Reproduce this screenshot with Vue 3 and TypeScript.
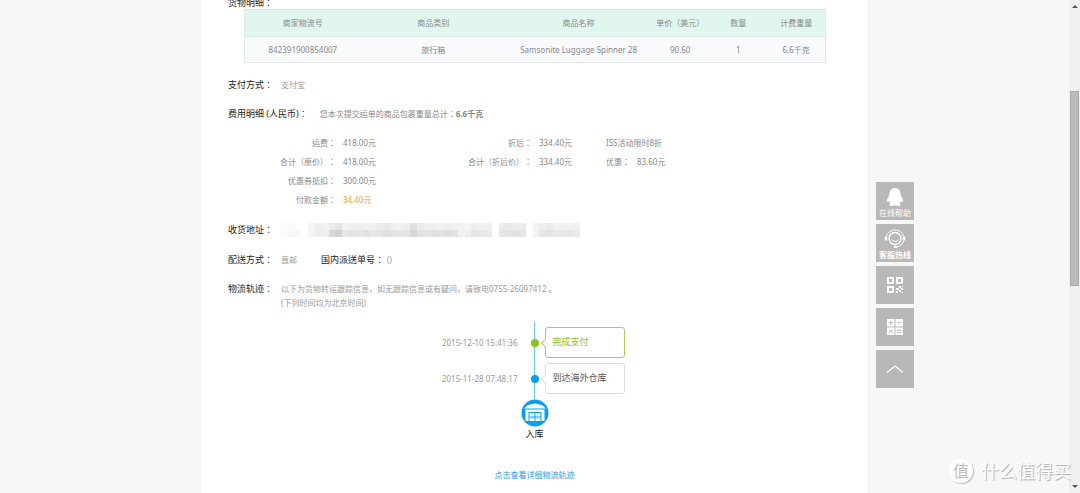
<script setup lang="ts">
interface Fee { label: string; value: string; accent?: boolean }

const columns: string[] = ['商家物流号', '商品类别', '商品名称', '单价（美元）', '数量', '计费重量']
const goods: string[][] = [
  ['842391900854007', '旅行箱', 'Samsonite Luggage Spinner 28', '90.60', '1', '6.6千克'],
]
const original: Fee[] = [
  { label: '运费：', value: '418.00元' },
  { label: '合计（原价）：', value: '418.00元' },
  { label: '优惠券抵扣：', value: '300.00元' },
  { label: '付款金额：', value: '34.40元', accent: true },
]
const discounted: Fee[] = [
  { label: '折后：', value: '334.40元' },
  { label: '合计（折后价）：', value: '334.40元' },
]
const events = [
  { time: '2015-12-10 15:41:36', text: '完成支付', state: 'done' },
  { time: '2015-11-28 07:48:17', text: '到达海外仓库', state: 'past' },
]
/* Grey levels of the tiles that hide the address, one list per row */
const mask: number[][] = [
  [
    250, 248, 255, 255, 245, 239, 243, 236, 229, 242, 240, 238, 242, 240, 236, 234, 240, 242, 238, 224, 236, 240,
    239, 241, 238, 240, 242, 244, 238, 242, 240, 255, 236, 234, 237, 236, 255, 243, 238, 235, 241, 239, 242, 240,
  ],
  [
    250, 247, 247, 255, 243, 238, 240, 214, 208, 230, 226, 229, 225, 231, 229, 223, 227, 230, 228, 214, 226, 228,
    224, 226, 222, 225, 240, 238, 229, 232, 235, 255, 230, 227, 225, 228, 255, 242, 230, 227, 234, 231, 229, 233,
  ],
]
</script>

<template>
  <div class="page">
    <div class="view">
      <main class="panel">
        <section class="goods">
          <h2>货物明细：</h2>
          <table>
            <colgroup>
              <col class="wide" /><col class="wider" /><col class="wider" /><col /><col /><col />
            </colgroup>
            <thead>
              <tr><th v-for="c in columns" :key="c" scope="col">{{ c }}</th></tr>
            </thead>
            <tbody>
              <tr v-for="row in goods" :key="row[0]"><td v-for="cell in row" :key="cell">{{ cell }}</td></tr>
            </tbody>
          </table>
        </section>

        <section class="line pay"><h2>支付方式：</h2><p>支付宝</p></section>
        <section class="line cost">
          <h2>费用明细 (人民币)：</h2>
          <p>您本次提交运单的商品包裹重量总计：<b>6.6千克</b></p>
        </section>

        <section class="fees">
          <dl class="first">
            <template v-for="f in original" :key="f.label">
              <dt>{{ f.label }}</dt><dd :class="{ accent: f.accent }">{{ f.value }}</dd>
            </template>
          </dl>
          <dl class="second">
            <template v-for="f in discounted" :key="f.label">
              <dt>{{ f.label }}</dt><dd>{{ f.value }}</dd>
            </template>
          </dl>
          <div class="third">
            <p>ISS活动限时8折</p>
            <p class="saving"><span>优惠：</span><span>83.60元</span></p>
          </div>
        </section>

        <section class="line address">
          <h2>收货地址：</h2>
          <div class="mask">
            <div v-for="(row, r) in mask" :key="r" class="tiles">
              <i v-for="(g, i) in row" :key="i" :style="{ backgroundColor: `rgb(${g}, ${g}, ${g})` }"></i>
            </div>
          </div>
        </section>
        <section class="line delivery">
          <h2>配送方式：</h2><p>直邮</p>
          <h2 class="number">国内派送单号：</h2><p>()</p>
        </section>
        <section class="line track">
          <h2>物流轨迹：</h2>
          <p>以下为货物转运跟踪信息，如无跟踪信息或有疑问，请致电0755-26097412 。<br />(下列时间均为北京时间)</p>
        </section>

        <section class="timeline">
          <ol>
            <li v-for="e in events" :key="e.time" :class="e.state">
              <time>{{ e.time }}</time><span class="dot"></span><p class="bubble">{{ e.text }}</p>
            </li>
          </ol>
          <div class="depot">
            <svg viewBox="0 0 28 28" width="28" height="28" aria-hidden="true">
              <circle cx="14" cy="14" r="13.5" fill="#0a9fe8" />
              <path d="M3 9.500 7 6 14 4.500l7 1.500 4 3.500z" fill="#fff" />
              <path d="M4.500 10.500h19V22h-3v-9h-13v9h-3z" fill="#fff" />
              <path d="M8.500 14h5v3.500h-5zM14.500 14h5v3.500h-5zM8.500 18.500h5V22h-5zM14.500 18.500h5V22h-5z" fill="#fff" />
              <path d="M10 15h2M16 15h2M10 19.500h2M16 19.500h2" stroke="#7cc9f2" stroke-width=".8" />
            </svg>
            <span>入库</span>
          </div>
        </section>
        <a class="more" href="#">点击查看详细物流轨迹</a>
      </main>

      <aside class="tools">
        <button type="button" class="labelled">
          <svg viewBox="0 0 22 20" width="22" height="20" aria-hidden="true">
            <path d="M11 1C7.500 1 5.500 3.600 5.500 7c0 1-.3 1.600-.8 2.400C3.400 11.300 2.600 13 3 14.700c.3.800 1.100.200 1.800-.6.300 1.200.9 2 1.700 2.700-.8.300-1.200.8-1 1.400.4 1 4.500.9 5.500.1 1 .8 5.100.9 5.500-.1.200-.6-.2-1.100-1-1.400.8-.7 1.400-1.500 1.700-2.700.7.800 1.500 1.400 1.800.6.400-1.700-.4-3.400-1.700-5.300-.5-.8-.8-1.400-.8-2.400 0-3.400-2-6-5.500-6z" fill="#fff" />
          </svg>
          <span>在线帮助</span>
        </button>
        <button type="button" class="labelled strong">
          <svg viewBox="0 0 22 20" width="22" height="20" fill="none" stroke="#fff" aria-hidden="true">
            <circle cx="11" cy="9.500" r="6" stroke-width="1.300" />
            <path d="M2.500 7C4 3 7 1 11 1s7 2 8.500 6M19.500 12c-1 3.500-3.500 5.500-7 6" />
            <path d="M2 7.500v4M20 7.500v4" stroke-width="2.500" />
            <path d="M7.500 10.500c1.500 2.500 5.500 2.500 7 0" />
            <path d="M10 18h3.500" stroke-width="2" />
          </svg>
          <span>客服热线</span>
        </button>
        <button type="button" aria-label="二维码">
          <svg viewBox="0 0 16 16" width="16" height="16" aria-hidden="true">
            <path d="M1 1h5v5H1zM10 1h5v5h-5zM1 10h5v5H1z" fill="none" stroke="#fff" stroke-width="2" />
            <path d="M9 11h3v2H9zM12 9h2v2h-2zM14 11h2v2h-2zM9 14h2v2H9zM12 13h2v2h-2zM14 15h2v1h-2zM15 9h1v1h-1z" fill="#fff" />
          </svg>
        </button>
        <button type="button" aria-label="计算器">
          <svg viewBox="0 0 16 16" width="16" height="16" aria-hidden="true">
            <path d="M0 0h7.500v7.500H0zM8.500 0H16v7.500H8.500zM0 8.500h7.500V16H0zM8.500 8.500H16V16H8.500z" fill="#fff" />
            <path d="M1.500 3.700h4.500M3.700 1.500v4.500M10 3.700h4.500M2 10.500l3.500 3.500M5.500 10.500 2 14M10 11.300h4.500M10 13.300h4.500" stroke="#b8b8b8" />
          </svg>
        </button>
        <button type="button" aria-label="返回顶部">
          <svg viewBox="0 0 18 8" width="18" height="8" fill="none" stroke="#fff" stroke-width="1.200" aria-hidden="true">
            <path d="M1 7.500 9 1l8 6.500" />
          </svg>
        </button>
      </aside>
    </div>

    <div class="scrollbar" aria-hidden="true">
      <svg viewBox="0 0 6 3" width="6" height="3"><path d="M0 3 3 0l3 3z" fill="#555" /></svg>
      <span class="before"></span><span class="thumb"></span><span class="after"></span>
      <svg viewBox="0 0 6 3" width="6" height="3"><path d="M0 0h6L3 3z" fill="#555" /></svg>
    </div>

    <div class="watermark"><span class="seal">值</span><span>什么值得买</span></div>
  </div>
</template>

<style>
body { background: #f7f7f7; }
</style>

<style scoped>
.page {
  position: relative;
  display: flex;
  height: 100vh;
  overflow: hidden;
  background: #f7f7f7;
  color: #888;
  font: 8px/14px "Noto Sans", "Noto Sans CJK SC", sans-serif;
  text-spacing-trim: space-all;
}
.view { flex: 1; display: grid; grid-template-columns: 1fr minmax(0, 667px) 1fr; }
.panel { grid-column: 2; background: #fff; padding: 0 27px; box-shadow: 0 0 1px #ddd; }
h2, p, dl, dd, ol { margin: 0; padding: 0; }
h2 { font-size: 9px; line-height: 14px; font-weight: 400; color: #222; white-space: nowrap; }
/* The TC face centres the full-width colon and brackets in their box */
h2, dt, th, .cost p, .saving { font-family: "Noto Sans", "Noto Sans CJK TC", sans-serif; }
.goods { margin-top: -4px; }
.goods table {
  width: calc(100% - 31px);
  margin: -1px 0 0 16px;
  border: 1px solid #dfe9e8;
  border-collapse: collapse;
  table-layout: fixed;
  text-align: center;
}
col { width: 10%; }
.wide { width: 20%; }
.wider { width: 25%; }
th, td { height: 26px; padding: 0; font-weight: 400; white-space: nowrap; }
th { background: #e1f6ee; border-top: 1px solid #d5eae3; border-bottom: 1px solid #d5eae3; }
td { height: 25px; background: #f8fafc; border-bottom: 1px solid #e2e8ea; }
.line { display: flex; }
.line p { color: #999; }
.line > p, .mask { margin-left: 8px; }
.pay { margin-top: 15px; }
.cost { margin-top: 15px; }
.cost > p { margin-left: 12px; color: #888; }
.fees { display: flex; margin-top: 12px; line-height: 19px; white-space: nowrap; }
dl { flex: none; display: grid; grid-template-columns: 1fr 40px; column-gap: 7px; align-content: start; }
dt { text-align: right; }
.first { width: 155px; }
.second { width: 196px; }
.third { margin-left: 27px; }
.saving { display: flex; gap: 7px; }
.accent { color: #ff9c2b; }
.address { margin-top: 14px; }
.mask { width: 299px; }
.tiles { display: flex; height: 7px; }
.tiles i { flex: 1; }
.delivery { margin-top: 16px; }
.line > .number { margin-left: 24px; }
.line > .number + p { margin-left: 3px; }
.track { margin-top: 15px; }
.timeline { margin-top: 12px; }
ol {
  list-style: none;
  padding-top: 5px;
  background: linear-gradient(#6fc8f2, #6fc8f2) 50% 0 / 1px 100% no-repeat;
}
li { display: grid; grid-template-columns: 1fr 8px 1fr; align-items: center; height: 31px; padding-bottom: 5px; }
time { text-align: right; margin-right: 13px; color: #999; }
.dot { width: 8px; height: 8px; border-radius: 50%; background: #0a9fe8; }
.bubble {
  position: relative;
  width: 80px;
  height: 31px;
  box-sizing: border-box;
  margin-left: 6px;
  padding: 7px;
  border: 1px solid #ddd;
  border-radius: 3px;
  background: #fff;
  color: #555;
  font-size: 9px;
}
.bubble::before {
  content: "";
  position: absolute;
  left: -4px;
  top: 12px;
  width: 5px;
  height: 5px;
  border: solid #ddd;
  border-width: 0 0 1px 1px;
  background: #fff;
  transform: rotate(45deg);
}
.done .dot { background: #8ac31f; }
.done .bubble { border-color: #a5d158; color: #8ac31f; }
.done .bubble::before { border-color: #a5d158; }
.depot { display: flex; flex-direction: column; align-items: center; color: #222; font-size: 9px; }
.more { display: block; width: max-content; margin: 27px auto 0; color: #2b9be6; text-decoration: none; }
.tools { grid-column: 3; display: flex; flex-direction: column; gap: 4px; margin: 182px 0 0 8px; }
button {
  display: flex;
  flex-direction: column;
  align-items: center;
  justify-content: center;
  width: 38px;
  height: 38px;
  padding: 0;
  border: 0;
  background: #b8b8b8;
  color: #fff;
  font: inherit;
  line-height: 12px;
  cursor: pointer;
}
.labelled { padding-top: 4px; }
.strong { font-weight: 700; }
.scrollbar {
  display: flex;
  flex-direction: column;
  align-items: center;
  width: 11px;
  box-sizing: border-box;
  padding: 5px 0;
  background: #f0f0f0;
}
.before { flex: 83; }
.thumb { flex: 195; width: 9px; background: #bbb; box-shadow: inset 0 0 0 1px #aaa; }
.after { flex: 199; }
.watermark {
  position: absolute;
  right: 9px;
  bottom: 9px;
  display: flex;
  align-items: center;
  gap: 8px;
  color: #fff;
  font-size: 18px;
  line-height: 26px;
  text-shadow: 1px 1px 1px #aaa;
}
.seal {
  width: 24px;
  height: 24px;
  border-radius: 50%;
  background: #fff;
  box-shadow: 1px 1px 1px #bbb;
  color: #bbb;
  font-size: 16px;
  line-height: 24px;
  text-align: center;
  text-shadow: none;
}
</style>
